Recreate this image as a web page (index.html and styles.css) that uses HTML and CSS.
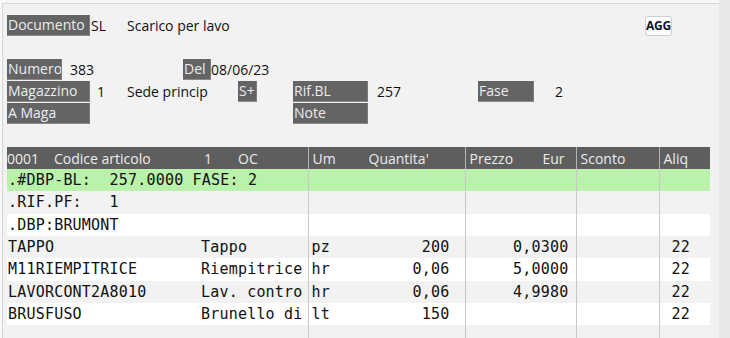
FILE: index.html
```html
<!DOCTYPE html>
<html lang="it">
<head>
  <meta charset="UTF-8" />
  <meta name="viewport" content="width=device-width, initial-scale=1.0" />
  <title>Documento SL</title>
  <link rel="stylesheet" href="styles.css">
</head>
<body>
  <div class="screen">
    <div class="panel">

      <div class="form-row first">
        <span class="label w83">Documento</span>
        <span class="value w37 pl1">SL</span>
        <span class="value">Scarico per lavo</span>
        <button class="btn-agg">AGG</button>
      </div>

      <div class="form-row gap-top">
        <span class="label w55">Numero</span>
        <span class="value w121 pl8">383</span>
        <span class="label w28">Del</span>
        <span class="value">08/06/23</span>
      </div>

      <div class="form-row">
        <span class="label w83">Magazzino</span>
        <span class="value w37 pl7">1</span>
        <span class="value w111">Sede princip</span>
        <span class="label w19">S+</span>
        <span class="value w36"></span>
        <span class="label w75">Rif.BL</span>
        <span class="value w110 pl9">257</span>
        <span class="label w56">Fase</span>
        <span class="value pl21">2</span>
      </div>

      <div class="form-row">
        <span class="label w83">A Maga</span>
        <span class="value w203"></span>
        <span class="label w75">Note</span>
      </div>

      <table class="grid">
        <thead>
          <tr>
            <th class="c-art">
              <span class="h-num">0001</span><span class="h-code">Codice articolo</span><span class="h-one">1</span><span>OC</span>
            </th>
            <th class="c-qta"><span class="h-um">Um</span>Quantita'</th>
            <th class="c-prz"><span class="h-prz">Prezzo</span>Eur</th>
            <th class="c-sco">Sconto</th>
            <th class="c-ali">Aliq</th>
          </tr>
        </thead>
        <tbody>
          <tr class="note-row">
            <td class="c-art">.#DBP-BL:  257.0000 FASE: 2</td>
            <td></td><td></td><td></td><td></td>
          </tr>
          <tr>
            <td class="c-art">.RIF.PF:   1</td>
            <td></td><td></td><td></td><td></td>
          </tr>
          <tr>
            <td class="c-art">.DBP:BRUMONT</td>
            <td></td><td></td><td></td><td></td>
          </tr>
          <tr>
            <td class="c-art"><span class="code">TAPPO</span>Tappo</td>
            <td><span class="um">pz</span><span class="num">200</span></td>
            <td class="num prz">0,0300</td>
            <td></td>
            <td class="num ali">22</td>
          </tr>
          <tr>
            <td class="c-art"><span class="code">M11RIEMPITRICE</span>Riempitrice</td>
            <td><span class="um">hr</span><span class="num">0,06</span></td>
            <td class="num prz">5,0000</td>
            <td></td>
            <td class="num ali">22</td>
          </tr>
          <tr>
            <td class="c-art"><span class="code">LAVORCONT2A8010</span>Lav. contro</td>
            <td><span class="um">hr</span><span class="num">0,06</span></td>
            <td class="num prz">4,9980</td>
            <td></td>
            <td class="num ali">22</td>
          </tr>
          <tr>
            <td class="c-art"><span class="code">BRUSFUSO</span>Brunello di</td>
            <td><span class="um">lt</span><span class="num">150</span></td>
            <td></td>
            <td></td>
            <td class="num ali">22</td>
          </tr>
          <tr>
            <td class="c-art"></td>
            <td></td><td></td><td></td><td></td>
          </tr>
        </tbody>
      </table>

    </div>
    <div class="side"></div>
  </div>
</body>
</html>
```

FILE: styles.css
```css
body {
  margin: 0;
  background: #f8f8f8;
  font-family: 'Open Sans', 'Noto Sans', sans-serif;
  font-size: 14px;
  color: #111;
  height: 338px;
  overflow: hidden;
}

.screen {
  display: flex;
  height: 338px;
}

.panel {
  width: 712px;
  margin: 3px 0 0 2px;
  padding: 11px 0 0 4px;
  background: #f2f2f2;
  border-top: 1px solid #d6d6d6;
  border-left: 1px solid #d6d6d6;
}

.side {
  flex: 1;
  background: #e8e8e8;
}

/* testata documento */
.form-row {
  display: flex;
  align-items: center;
  height: 21px;
  margin-bottom: 1px;
}

.form-row.gap-top {
  margin-top: 23px;
}

.label {
  box-sizing: border-box;
  height: 21px;
  line-height: 20px;
  padding-left: 1px;
  background: #646464;
  color: #ececec;
  border-bottom: 1px solid #8a8a8a;
  border-right: 1px solid #7c7c7c;
  white-space: nowrap;
  overflow: hidden;
}

.value {
  box-sizing: border-box;
  line-height: 21px;
  white-space: nowrap;
}

.w19 { width: 19px; }
.w28 { width: 28px; }
.w36 { width: 36px; }
.w37 { width: 37px; }
.w55 { width: 55px; }
.w56 { width: 56px; }
.w75 { width: 75px; }
.w83 { width: 83px; }
.w110 { width: 110px; }
.w111 { width: 111px; }
.w121 { width: 121px; }
.w203 { width: 203px; }

.pl1 { padding-left: 1px; }
.pl7 { padding-left: 7px; }
.pl8 { padding-left: 8px; }
.pl9 { padding-left: 9px; }
.pl21 { padding-left: 21px; }

.btn-agg {
  margin-left: auto;
  margin-right: 47px;
  width: 27px;
  height: 20px;
  padding: 0;
  background: #fff;
  border: 1px solid #cfcfcf;
  border-radius: 3px;
  font-family: 'Open Sans', sans-serif;
  font-size: 12px;
  font-weight: 700;
  letter-spacing: -0.3px;
  color: #12122a;
}

/* righe documento */
.grid {
  margin-top: 23px;
  width: 703px;
  border-collapse: collapse;
  table-layout: fixed;
}

.grid th,
.grid td {
  box-sizing: border-box;
}

.grid th {
  height: 22px;
  padding: 0 0 0 4px;
  background: #5e5e5e;
  color: #ececec;
  font-weight: 400;
  text-align: left;
  white-space: nowrap;
  border-left: 1px solid #b4b4b4;
}

.grid td {
  height: 22.33px;
  padding: 0;
  font-family: 'DejaVu Sans Mono', monospace;
  font-size: 15px;
  letter-spacing: 0.2px;
  white-space: pre;
  overflow: hidden;
  border-left: 1px solid #c8c8c8;
}

.grid th.c-art,
.grid td.c-art {
  border-left: none;
  padding-left: 0;
}

.grid td.c-art { padding-left: 1px; }

.c-art { width: 301px; }
.c-qta { width: 157px; }
.c-prz { width: 111px; }
.c-sco { width: 83px; }
.c-ali { width: 51px; }

.h-num { display: inline-block; width: 47px; }
.h-code { display: inline-block; width: 150px; }
.h-one { display: inline-block; width: 34px; }
.h-um { display: inline-block; width: 56px; }
.h-prz { display: inline-block; width: 73px; }

.grid tbody tr:nth-child(even) { background: #f2f2f2; }
.grid tbody tr:nth-child(odd) { background: #fff; }
.grid tbody tr.note-row { background: #b9f2aa; }

.code { display: inline-block; width: 193px; }

.um {
  display: inline-block;
  padding-left: 3px;
}

.grid td .num {
  float: right;
  padding-right: 15px;
}

.grid td.prz { text-align: right; padding-right: 7px; }
.grid td.ali { text-align: right; padding-right: 20px; }
```
